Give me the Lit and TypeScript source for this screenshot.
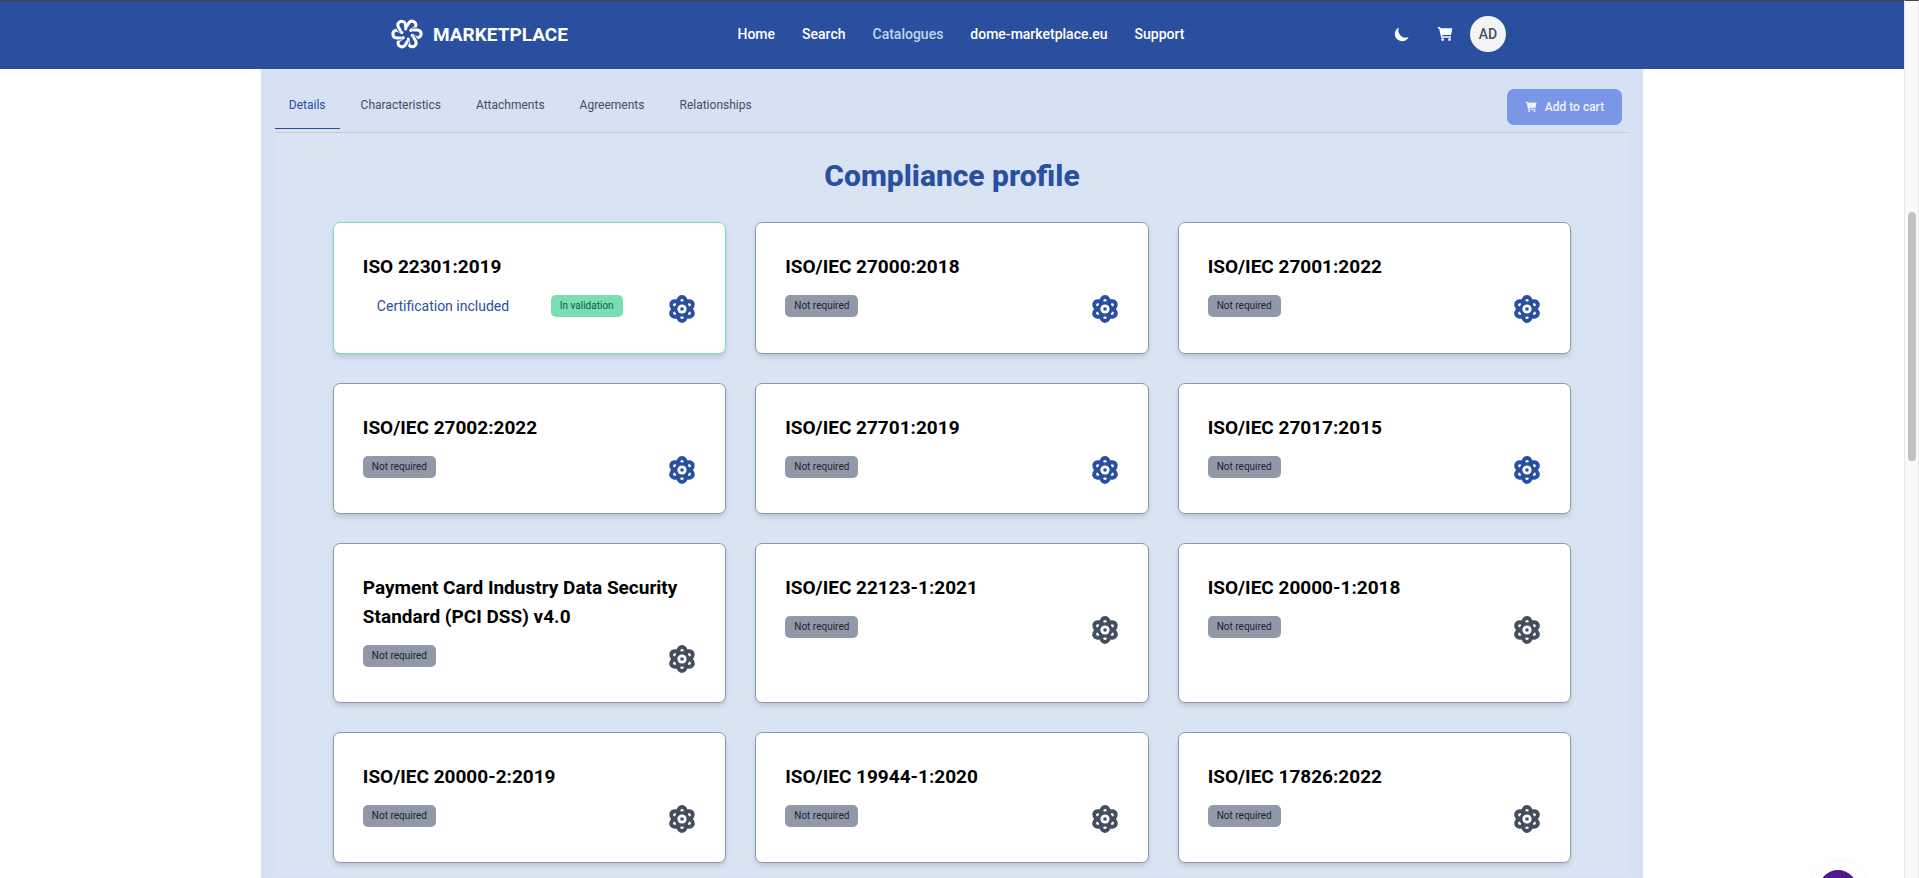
import { LitElement, html, css, svg, nothing } from "lit";
import { customElement, property } from "lit/decorators.js";

interface Certification {
  name: string;
  validating?: boolean;
  tone: "brand" | "slate";
}

const CERTIFICATIONS: Certification[] = [
  { name: "ISO 22301:2019", validating: true, tone: "brand" },
  { name: "ISO/IEC 27000:2018", tone: "brand" },
  { name: "ISO/IEC 27001:2022", tone: "brand" },
  { name: "ISO/IEC 27002:2022", tone: "brand" },
  { name: "ISO/IEC 27701:2019", tone: "brand" },
  { name: "ISO/IEC 27017:2015", tone: "brand" },
  { name: "Payment Card Industry Data Security Standard (PCI DSS) v4.0", tone: "slate" },
  { name: "ISO/IEC 22123-1:2021", tone: "slate" },
  { name: "ISO/IEC 20000-1:2018", tone: "slate" },
  { name: "ISO/IEC 20000-2:2019", tone: "slate" },
  { name: "ISO/IEC 19944-1:2020", tone: "slate" },
  { name: "ISO/IEC 17826:2022", tone: "slate" },
];

const NAV = ["Home", "Search", "Catalogues", "dome-marketplace.eu", "Support"];
const TABS = ["Details", "Characteristics", "Attachments", "Agreements", "Relationships"];

const cartShape = svg`
  <path d="M1 1.2h3.1l.5 1.8H19l-1.7 8.2H6.4l.4 1.6h10.7v1.8H5.2L2.7 3H1z" />
  <path d="M5 3h14l-1.7 8.2H6.4z" />
  <circle cx="7" cy="17" r="1.7" /><circle cx="15.6" cy="17" r="1.7" />`;

@customElement("market-header")
export class MarketHeader extends LitElement {
  static styles = css`
    :host { display: block; background: #294f9e; border-top: 1px solid #444; color: #fff; }
    .bar {
      display: grid; grid-template-columns: 1fr auto 1fr; align-items: center;
      width: 60%; max-width: 1124px; height: 68px; margin: 0 auto; padding: 0 8px 2px 0; box-sizing: border-box;
    }
    .brand { display: flex; align-items: center; gap: 9px; color: inherit; text-decoration: none; font-size: 19px; font-weight: 700; }
    .logo { width: 34px; height: 32px; }
    .nav { display: flex; gap: 27px; padding-left: 26px; }
    .link { color: #fff; text-decoration: none; font-size: 14px; line-height: 20px; font-weight: 500; }
    .link.current { color: #c3d3f2; }
    .tools { display: flex; align-items: center; justify-content: flex-end; }
    .tool { display: flex; border: 0; padding: 0; background: none; color: #fff; font: inherit; }
    .moon { width: 18px; height: 18px; margin-right: 26px; }
    .cart { width: 16px; height: 16px; margin-right: 17px; }
    .avatar {
      width: 36px; height: 36px; border-radius: 50%; background: #f3f4f6; color: #434f5e;
      align-items: center; justify-content: center; font-size: 14px; font-weight: 500;
    }
  `;

  render() {
    return html`
      <div class="bar">
        <a class="brand" href="#">
          <svg class="logo" viewBox="-17 -16 34 32" fill="none" stroke-linecap="round" stroke-linejoin="round">
            ${[30, 90, 150, 210, 270, 330].map(
              (a) => svg`<g transform="rotate(${a})">
                <path stroke="#294f9e" stroke-width="4.8" d="M-4.2 -7.2V-11" />
                <path stroke="#fff" stroke-width="3" d="M-4 -6.4V-10.6A3.9 3.9 0 0 1 3.6 -11.4Q4 -9.4 1.4 -5" />
              </g>`
            )}
          </svg>
          MARKETPLACE
        </a>
        <nav class="nav">
          ${NAV.map((n) => html`<a class="link ${n === "Catalogues" ? "current" : ""}" href="#">${n}</a>`)}
        </nav>
        <div class="tools">
          <button class="tool" aria-label="Dark mode">
            <svg class="moon" viewBox="0 0 20 20" fill="currentColor"><path d="M17.3 13.3A8 8 0 0 1 6.7 2.7a8 8 0 1 0 10.6 10.6z" /></svg>
          </button>
          <button class="tool" aria-label="Cart">
            <svg class="cart" viewBox="0 0 20 20" fill="currentColor">${cartShape}</svg>
          </button>
          <button class="tool avatar">AD</button>
        </div>
      </div>
    `;
  }
}

@customElement("certification-card")
export class CertificationCard extends LitElement {
  @property({ attribute: false }) item!: Certification;

  static styles = css`
    :host { display: block; }
    .card {
      box-sizing: border-box; height: 100%; padding: 29px; border: 1px solid #8f98a8; border-radius: 7px;
      background: #fff; box-shadow: 0 4px 6px -1px rgba(0, 0, 0, 0.1), 0 2px 4px -2px rgba(0, 0, 0, 0.1);
    }
    .card.validating { border-color: #79deb3; }
    .name { margin: 0 0 14px; color: #000; font-size: 19px; line-height: 29px; font-weight: 700; }
    .status { display: flex; align-items: flex-start; justify-content: space-between; }
    .included { margin: 0 14px; color: #294f9e; font-size: 14px; line-height: 22px; padding-bottom: 7px; }
    .badge { padding: 0 9px; border-radius: 5px; background: #9198a7; color: #1b2333; font-size: 10px; line-height: 22px; }
    .validating .badge { margin-right: 18px; background: #79deb3; color: #0f5c46; }
    .icon { width: 28px; height: 28px; color: #434f5e; }
    .brand .icon { color: #294f9e; }
  `;

  render() {
    const { name, validating, tone } = this.item;
    return html`
      <article class="card ${tone} ${validating ? "validating" : ""}">
        <h2 class="name">${name}</h2>
        <div class="status">
          ${validating ? html`<p class="included">Certification included</p>` : nothing}
          <span class="badge">${validating ? "In validation" : "Not required"}</span>
          <svg class="icon" viewBox="-14 -14 28 28" fill="none" stroke="currentColor" stroke-width="4">
            ${[0, 60, 120].map((a) => svg`<rect x="-4" y="-12" width="8" height="24" rx="4" ry="5.5" transform="rotate(${a})" />`)}
            <circle r="7.6" fill="currentColor" stroke="none" />
            <circle r="4.6" fill="#fff" stroke="none" />
            <circle r="1.8" fill="currentColor" stroke="none" />
          </svg>
        </div>
      </article>
    `;
  }
}

@customElement("app-root")
export class AppRoot extends LitElement {
  static styles = css`
    :host {
      display: grid; grid-template-columns: minmax(0, 1fr) 15px; min-height: 100vh;
      background: #fff; font-family: Roboto, "Liberation Sans", sans-serif;
    }
    .page { display: flex; flex-direction: column; }
    .panel { flex: 1; box-sizing: border-box; width: 72.6%; margin: 0 auto; padding: 0 14px; background: #d7e1f4; }
    .toolbar {
      display: flex; align-items: flex-end; justify-content: space-between; box-sizing: border-box;
      height: 64px; border-bottom: 1px solid #c9ccd3;
    }
    .tabs { display: flex; gap: 7px; margin-bottom: 3px; }
    .tab {
      padding: 12px 14px 13px; border: 0; border-bottom: 1px solid transparent; background: none;
      color: #434f5e; font-family: inherit; font-size: 12px; line-height: 20px;
    }
    .tab.active { border-color: #294f9e; color: #294f9e; }
    .add {
      display: flex; align-items: center; gap: 8px; height: 36px; margin: 0 7px; padding: 0 18px; border: 0;
      margin-bottom: 7px; border-radius: 7px; background: #7997e6; color: #eef2fc;
      font-family: inherit; font-size: 12px; font-weight: 500;
    }
    .add-icon { width: 12px; height: 12px; }
    .body { padding: 25px 58px 14px; background: #d8e3f3; }
    .title { margin: 0 0 28px; color: #294f9e; font-size: 30px; line-height: 36px; font-weight: 800; text-align: center; }
    .grid { display: grid; grid-template-columns: repeat(3, minmax(0, 1fr)); gap: 29px; }
    .track { border: 1px solid #e6e6e6; border-width: 1px 1px 0; border-top-color: #444; background: #fafafa; box-sizing: border-box; padding: 211px 2px 0 3px; }
    .thumb { height: 249px; border-radius: 4px; background: #c1c1c1; }
    .chat {
      position: fixed; right: 53px; bottom: -39px; width: 56px; height: 56px; padding: 0; border: 9px solid #fff;
      border-radius: 50%; background: #4f1a8c; box-shadow: 0 0 8px rgba(0, 0, 0, 0.04);
    }
  `;

  render() {
    return html`
      <div class="page">
        <market-header></market-header>
        <main class="panel">
          <div class="toolbar">
            <div class="tabs" role="tablist">
              ${TABS.map((t, i) => html`<button class="tab ${i ? "" : "active"}" role="tab">${t}</button>`)}
            </div>
            <button class="add">
              <svg class="add-icon" viewBox="0 0 20 20" fill="currentColor">${cartShape}</svg>Add to cart
            </button>
          </div>
          <section class="body">
            <h1 class="title">Compliance profile</h1>
            <div class="grid">
              ${CERTIFICATIONS.map((c) => html`<certification-card .item=${c}></certification-card>`)}
            </div>
          </section>
        </main>
      </div>
      <div class="track"><div class="thumb"></div></div>
      <button class="chat" aria-label="Chat"></button>
    `;
  }
}
